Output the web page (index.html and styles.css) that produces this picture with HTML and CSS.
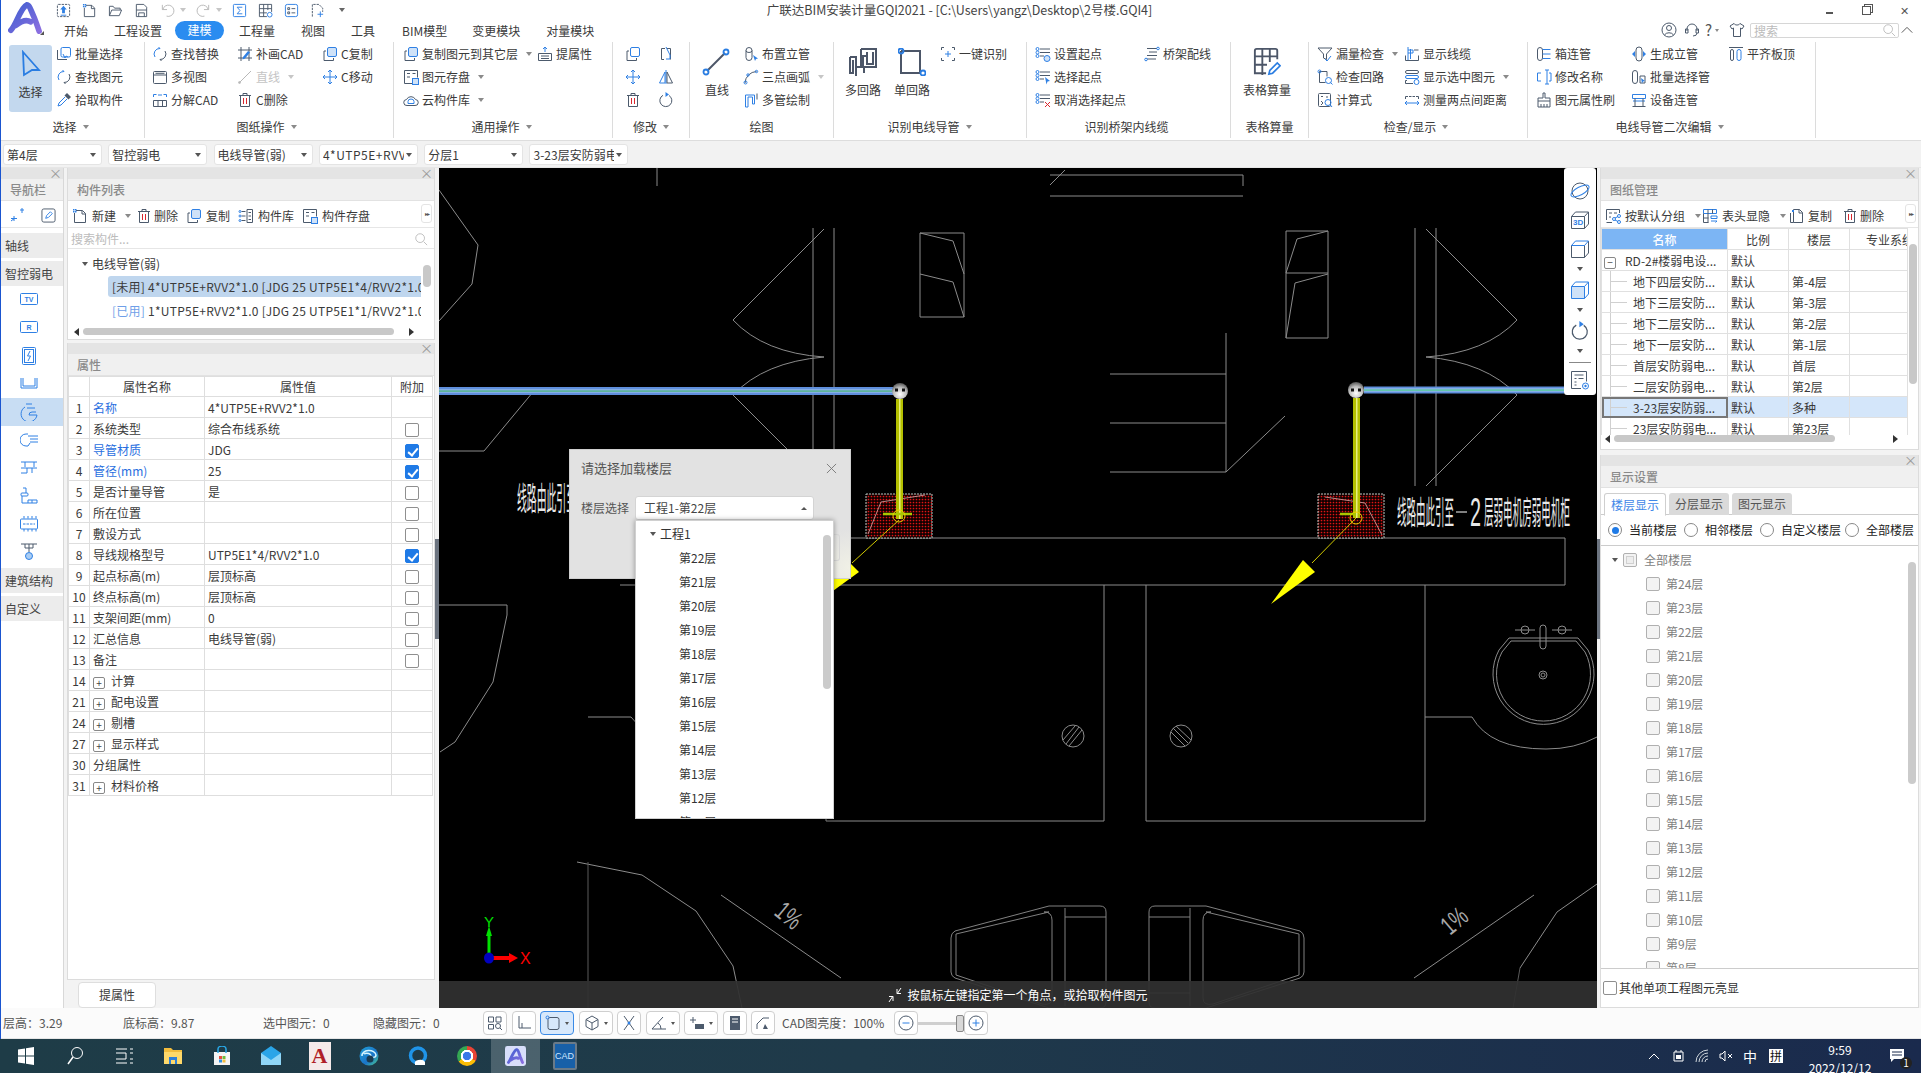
FILE: index.html
```html
<!DOCTYPE html>
<html lang="zh-CN">
<head>
<meta charset="utf-8">
<title>广联达BIM安装计量GQI2021</title>
<link rel="stylesheet" href="styles.css">
</head>
<body>
<svg class="sprite" xmlns="http://www.w3.org/2000/svg">
<defs>
<linearGradient id="lg" x1="0" y1="0" x2="1" y2="1"><stop offset="0" stop-color="#3f5fd0"/><stop offset="1" stop-color="#8a6ee0"/></linearGradient>
<radialGradient id="ball" cx=".5" cy=".7" r=".7"><stop offset="0" stop-color="#fff"/><stop offset=".6" stop-color="#bbb"/><stop offset="1" stop-color="#555"/></radialGradient>
<linearGradient id="edge" x1="0" y1="0" x2="1" y2="1"><stop offset="0" stop-color="#1fa0d8"/><stop offset=".6" stop-color="#1b74c8"/><stop offset="1" stop-color="#4fd08a"/></linearGradient>
<pattern id="rd" width="3" height="3" patternUnits="userSpaceOnUse"><rect width="3" height="3" fill="#120000"/><circle cx="1.5" cy="1.5" r=".85" fill="#e01414"/></pattern>
</defs>
<symbol id="up" viewBox="0 0 16 16"><rect class="sg dash" x="1.5" y="1.5" width="13" height="13" rx="1"/><path class="fb" d="M8 3l3.5 4H9.5v4h-3V7H4.500z"/><path class="sb" d="M5 13h6"/></symbol>
<symbol id="new" viewBox="0 0 16 16"><path class="sg" d="M4 2.500h6.500l3 3V14.500H2.500V5"/><path class="sg" d="M10 2.500v3.500h3.500"/><path class="fb" d="M1 1h1.500v1.500H1zM3 1h1.500v1.500H3zM1 3h1.500v1.500H1zM3 3h1.500v1.500H3z"/></symbol>
<symbol id="open" viewBox="0 0 16 16"><path class="sg" d="M1.500 13.500v-10h4l1.500 2h6v2M1.500 13.500l2.500-6h10.500l-2.500 6z"/></symbol>
<symbol id="save" viewBox="0 0 16 16"><path class="sg" d="M2.500 1.500h8l3 3v10h-11zM2.500 7.500h11M5 14.500v-4h6v4"/></symbol>
<symbol id="undo" viewBox="0 0 16 16"><path class="sl" d="M2.500 2v5h5M3 7a6 6 0 1 1 4 7"/></symbol>
<symbol id="redo" viewBox="0 0 16 16"><path class="sl" d="M13.500 2v5h-5M13 7a6 6 0 1 0-4 7"/></symbol>
<symbol id="sum" viewBox="0 0 16 16"><rect class="sb" x="1.500" y="1.500" width="13" height="13" rx="1"/><path class="sb" d="M11 4.500H5.500L8.500 8l-3 3.500H11"/></symbol>
<symbol id="gridq" viewBox="0 0 16 16"><path class="sg" d="M1.500 1.500h13v8M1.500 1.500v13h8M1.500 6h13M1.500 10.500h8M6 1.500v13M10.500 1.500v6"/><circle class="sb" cx="12.500" cy="12.500" r="2.500"/></symbol>
<symbol id="listq" viewBox="0 0 16 16"><rect class="sb" x="1.500" y="1.500" width="13" height="13" rx="2"/><path class="sg" d="M4 5h2v2H4zM4 9.500h2v2H4zM8 6h4M8 10.500h4"/></symbol>
<symbol id="docp" viewBox="0 0 16 16"><path class="sg dash" d="M2.500 14.500v-13h7l4 4v4"/><path class="sb" d="M11 9v6M8 12h6"/></symbol>
<symbol id="batch" viewBox="0 0 16 16"><rect class="sb" x="5" y="1.500" width="9.500" height="9.500" rx="1.500"/><path class="sg" d="M1.500 4v9.500H11"/><path class="sb" d="M7 8l2 4 1-2 2 1"/></symbol>
<symbol id="find" viewBox="0 0 16 16"><path class="sb" d="M3 11A5.500 5.500 0 0 1 8 2.500L6.500 1"/><path class="sg" d="M13 5a5.500 5.500 0 0 1-5 8.500l1.500 1.500"/></symbol>
<symbol id="pick" viewBox="0 0 16 16"><path class="fg" d="M11 1l4 4-2.500 2.500-4-4z"/><path class="sb" d="M9 5L3 11l-1 3 3-1 6-6"/></symbol>
<symbol id="mv" viewBox="0 0 16 16"><rect class="sg" x="1.500" y="2.500" width="13" height="12" rx="1"/><path class="sg" d="M1.500 6h13M3.500 4.300h9"/></symbol>
<symbol id="expl" viewBox="0 0 16 16"><path class="sb" d="M1.500 5V2.500h3M11.500 2.500h3V5M6 3h4"/><path class="sg" d="M1.500 8.500h13v6h-13zM6 8.500v6M10.500 8.500v6"/></symbol>
<symbol id="patch" viewBox="0 0 16 16"><path class="sg" d="M4 1v14M12 1v14M1 4h14M1 12h14"/><path class="fb" d="M6 11l5-6 2 1.500-5 6-2.500 1z"/></symbol>
<symbol id="ln" viewBox="0 0 16 16"><path class="sl" d="M2 14L14 2"/><circle class="sl" cx="2.500" cy="13.500" r="1"/></symbol>
<symbol id="trash" viewBox="0 0 16 16"><path class="sg" d="M2 3.500h12M6 3.500V1.500h4v2M3.500 3.500v11h9v-11"/><path class="sr" d="M6.500 6v6M9.500 6v6"/></symbol>
<symbol id="dup" viewBox="0 0 16 16"><rect class="fl" x="5.500" y="1.500" width="9" height="9" rx="1.500"/><path class="sg" d="M4 5H2v9.500h9.500V12"/></symbol>
<symbol id="move" viewBox="0 0 16 16"><path class="sb" d="M8 1v14M1 8h14M6 3l2-2 2 2M6 13l2 2 2-2M3 6L1 8l2 2M13 6l2 2-2 2"/></symbol>
<symbol id="store" viewBox="0 0 16 16"><path class="sg" d="M9 14.500H1.500v-13h13v7"/><path class="sg" d="M4 4.500h3M4 8h3M9.500 4.500h3"/><rect class="fl" x="9.500" y="9.500" width="6" height="6"/></symbol>
<symbol id="cloud" viewBox="0 0 16 16"><path class="sg" d="M4 13.500a3 3 0 0 1-.5-6 5 5 0 0 1 9 0 3 3 0 0 1-.5 6z"/><path class="sb" d="M5 9.500a3 2.500 0 0 1 6 0v2H5z"/></symbol>
<symbol id="prop" viewBox="0 0 16 16"><path class="sg" d="M1.500 14.500v-7h13v7zM4 10h8M4 12.500h8"/><path class="sb" d="M8 6V1M6 3l2-2 2 2"/></symbol>
<symbol id="flipv" viewBox="0 0 16 16"><path class="sg" d="M7 2.500H3.500v11H6M9 2.500h3.500v11"/><path class="sb" d="M8 1l4 8v4H8"/></symbol>
<symbol id="mirror" viewBox="0 0 16 16"><path class="sb" d="M7 3L1.500 14H7zM8 1v14"/><path class="sg" d="M9 3l5.500 11H9z"/></symbol>
<symbol id="rot" viewBox="0 0 16 16"><path class="sg" d="M11 3.500a6 6 0 1 1-6-.2"/><path class="fb" d="M7.500 0l3.500 2.500-3.500 2.500z"/></symbol>
<symbol id="riser" viewBox="0 0 16 16"><rect class="sg" x="3" y="1.500" width="6" height="13" rx="3"/><path class="sg" d="M3 4.500a3 2 0 0 0 6 0"/><path class="fb" d="M10 9l5 3.500-2 .5-1 2z"/></symbol>
<symbol id="arc" viewBox="0 0 16 16"><path class="sg" d="M2 14A12 12 0 0 1 13.500 2.500"/><circle class="sb" cx="2.500" cy="13.500" r="1.500"/><circle class="sb" cx="5" cy="6" r="1.200"/><circle class="sb" cx="13.500" cy="2.500" r="1.200"/></symbol>
<symbol id="mp" viewBox="0 0 16 16"><path class="sb" d="M2.500 15V3h9v9h-2V5H5v10z"/><path class="sg" d="M14 1.500v6"/></symbol>
<symbol id="one" viewBox="0 0 16 16"><path class="sg" d="M4 1.500H1.500V4M12 1.500h2.500V4M4 14.500H1.500V12M12 14.500h2.500V12"/><path class="sb" d="M8 5v6M5 8h6"/></symbol>
<symbol id="sset" viewBox="0 0 16 16"><path class="sg" d="M5 3h10M5 6.500h10M5 10h4"/><circle class="sb" cx="2.500" cy="3" r="1.500"/><circle class="sb" cx="2.500" cy="6.500" r="1.500"/><circle class="sb" cx="2.500" cy="10" r="1.500"/><circle class="fl" cx="12" cy="12.500" r="3"/></symbol>
<symbol id="ssel" viewBox="0 0 16 16"><path class="sg" d="M5 3h10M5 6.500h10M5 10h4"/><circle class="sb" cx="2.500" cy="3" r="1.500"/><circle class="sb" cx="2.500" cy="6.500" r="1.500"/><circle class="sb" cx="2.500" cy="10" r="1.500"/><path class="fb" d="M10 8l5 4-2.500.5-1 3z"/></symbol>
<symbol id="scan" viewBox="0 0 16 16"><path class="sg" d="M5 3h10M5 6.500h10M5 10h4"/><circle class="sb" cx="2.500" cy="3" r="1.500"/><circle class="sb" cx="2.500" cy="6.500" r="1.500"/><circle class="sb" cx="2.500" cy="10" r="1.500"/><path class="sr" d="M10 10l5 5M15 10l-5 5"/></symbol>
<symbol id="tray" viewBox="0 0 16 16"><path class="sg" d="M3 2.500h10M5 6h8M3 9.500h10M3 13h9"/><circle class="sb" cx="14" cy="2.500" r="1.300"/><circle class="sb" cx="2" cy="13.500" r="1.300"/></symbol>
<symbol id="leak" viewBox="0 0 16 16"><path class="sg" d="M1 2h14L9.500 8v5.500L6.500 12V8z"/><path class="sb" d="M8 13l2 2 4-5"/></symbol>
<symbol id="showc" viewBox="0 0 16 16"><path class="sb" d="M4 1v14M6.500 3v10M4 4h5v3H4"/><path class="sg" d="M1.500 9.500v5h13v-5M10 4h4.500"/></symbol>
<symbol id="chkl" viewBox="0 0 16 16"><path class="sg" d="M2.500 2.500v11h6M2.500 2.500H10v5"/><circle class="sb" cx="2.500" cy="2.500" r="1.500"/><circle class="sb" cx="11.500" cy="11.500" r="3"/><path class="sb" d="M13.500 13.500l2 2"/></symbol>
<symbol id="calc" viewBox="0 0 16 16"><rect class="sg" x="1.500" y="1.500" width="12" height="13" rx="1"/><path class="sg" d="M4 4.500h2M9 5h2M4 9l2 2-2 2"/><circle class="sb" cx="11" cy="10.500" r="3"/><path class="sb" d="M13 12.500l2 2.500"/></symbol>
<symbol id="showsel" viewBox="0 0 16 16"><rect class="sg" x="1.500" y="1.500" width="13" height="3" rx="1.500"/><rect class="sb" x="1.500" y="6.500" width="13" height="3" rx="1.500"/><path class="sg" d="M3 11.500h-1.500v3H9"/><circle class="sb" cx="12.500" cy="13" r="2.500"/></symbol>
<symbol id="meas" viewBox="0 0 16 16"><path class="sg dash" d="M1.500 4.500h13M1.500 4.500v3M14.500 4.500v3"/><path class="sb" d="M1 11h14M3 9l-2 2 2 2M13 9l2 2-2 2"/></symbol>
<symbol id="ref" viewBox="0 0 16 16"><rect class="sg" x="1.500" y="1.500" width="5" height="13" rx="2.500"/><path class="sb" d="M6.500 3.500h8M6.500 8h8M6.500 12.500h8"/></symbol>
<symbol id="ren" viewBox="0 0 16 16"><path class="sb" d="M5 4H1.500v8H5M9 1h4M9 15h4M11 1v14M13 4h2v8h-2"/></symbol>
<symbol id="brush" viewBox="0 0 16 16"><path class="sg" d="M7 1h2v5h5v3H2V6h5zM2 9v6h12V9M5 15v-3M8 15v-3M11 15v-3"/></symbol>
<symbol id="rise2" viewBox="0 0 16 16"><rect class="sg" x="5" y="1" width="6" height="14" rx="3"/><path class="fb" d="M1 8l3-3v6zM15 8l-3-3v6z"/></symbol>
<symbol id="batch2" viewBox="0 0 16 16"><rect class="sg" x="1.500" y="1.500" width="5" height="13" rx="2.500"/><path class="sg" d="M9 7h5v7H9z"/><path class="fb" d="M10 9l4 3-2 .5-1 2z"/></symbol>
<symbol id="equip" viewBox="0 0 16 16"><path class="sb" d="M1.500 2.500h13v4h-13zM2 9h12"/><path class="sg" d="M4 6.500v8M12 6.500v8M1.500 14.500h13"/></symbol>
<symbol id="flat" viewBox="0 0 16 16"><path class="sg" d="M1 1.500h14"/><rect class="sg" x="2.500" y="3.500" width="3" height="11" rx="1.500"/><rect class="sb" x="9" y="3.500" width="4" height="11" rx="2"/></symbol>
<symbol id="dupt" viewBox="0 0 16 16"><rect class="sb" x="5.500" y="1.500" width="9" height="9" rx="1.500"/><path class="sg" d="M4 5H2v9.500h9.500V12"/></symbol>
<symbol id="lib" viewBox="0 0 16 16"><path class="sg" d="M9 1.500h5.500v13H9z"/><path class="sg" d="M10.500 4.500h2.500M10.500 8h2.500M10.500 11.500h2.500M3.500 3.500h4M3.500 8h4M3.500 12.500h4"/><circle class="sb" cx="2" cy="3.500" r="1"/><circle class="sb" cx="2" cy="8" r="1"/><circle class="sb" cx="2" cy="12.500" r="1"/></symbol>
<symbol id="grp" viewBox="0 0 16 16"><path class="sg" d="M1.500 12V1.500h13V5M1.500 14.500H7"/><path class="sg" d="M4 5h3M9 5h3M4 9h2"/><circle class="sb" cx="9" cy="11" r="1.500"/><circle class="sb" cx="14" cy="8" r="1.500"/><circle class="sb" cx="14" cy="14" r="1.500"/><path class="sb" d="M10 10l3-1.500M10 12l3 1.500"/></symbol>
<symbol id="tbl" viewBox="0 0 16 16"><path class="sb" d="M1.500 1.500h13v4h-13z"/><path class="sg" d="M1.500 5.500v9h5M1.500 10h5M6 1.500v13M10.500 1.500v4"/><path class="sb" d="M9 8h6v2.500H9zM9 13h6M15 13l-1.500 1.500"/></symbol>
<symbol id="doc2" viewBox="0 0 16 16"><path class="sg" d="M5.500 1.500h6l3 3v10h-9zM2.500 5v9.500h3M11 1.500V5h3.500"/><path class="fb" d="M4 2h2v2H4z"/></symbol>
<symbol id="orbit" viewBox="0 0 20 20"><circle class="sg" cx="10" cy="10" r="8"/><ellipse class="sb" cx="10" cy="10" rx="10" ry="4" transform="rotate(-28 10 10)"/></symbol>
<symbol id="c3d" viewBox="0 0 20 20"><path class="sg" d="M1.500 6.500h13v12h-13zM1.500 6.500l4-4.500h13v12l-4 4.500M14.500 6.500l4-4.500"/></symbol>
<symbol id="cube" viewBox="0 0 20 20"><path class="sg" d="M1.500 6.500h13v12h-13zM14.500 18.500l4-4.500V2"/><path class="sb" d="M1.500 6.500l4-4.500h13l-4 4.500z"/></symbol>
<symbol id="cubeb" viewBox="0 0 20 20"><path class="fl" d="M1.500 6.500h13v12h-13z"/><path class="sb" d="M1.500 6.500l4-4.500h13v12l-4 4.500M14.500 6.500l4-4.500"/></symbol>
<symbol id="rlist" viewBox="0 0 20 20"><path class="sg" d="M1.500 18.500v-17h15v10M1.500 18.500H11M4.500 5h9M4.500 8.500h2M8.500 8.500h5M4.500 12h2M4.500 15h2"/><circle class="sb" cx="15.500" cy="16" r="3"/><circle class="fb" cx="15.500" cy="16" r="1.200"/></symbol>
<symbol id="toilet" viewBox="940 900 180 112"><path class="scad" d="M1106 912Q1106 906 1100 906H1049L955 931Q951 933 951 938V972Q951 976 955 978L1049 1008H1100Q1106 1008 1106 1002ZM1049 912L956 934V975L1042 1004Q1052 1006 1052 998V920Q1052 912 1044 912ZM1065 908V1006M1065 917H1106M1065 993H1106"/></symbol>
</svg>

<div class="page">
  <header class="top">
    <div class="logo">
      <svg class="logo-a" viewBox="0 0 36 34"><path d="M3 30C9 24 13 6 20 3c3 0 5 8 8 14 2 5 4 11 5 14M8 25c5-4 11-7 16-4" fill="none" stroke="url(#lg)" stroke-width="6" stroke-linecap="round"/></svg>
      <i class="logo-mark"></i>
    </div>
    <div class="top-rows">
      <div class="row-title">
        <div class="qat">
          <svg class="ic"><use href="#up"/></svg>
          <svg class="ic"><use href="#new"/></svg>
          <svg class="ic"><use href="#open"/></svg>
          <svg class="ic"><use href="#save"/></svg>
          <svg class="ic"><use href="#undo"/></svg><i class="caret lt"></i>
          <svg class="ic"><use href="#redo"/></svg><i class="caret lt"></i>
          <svg class="ic"><use href="#sum"/></svg>
          <svg class="ic"><use href="#gridq"/></svg>
          <svg class="ic"><use href="#listq"/></svg>
          <svg class="ic"><use href="#docp"/></svg>
          <i class="caret qm"></i>
        </div>
        <div class="wintitle">广联达BIM安装计量GQI2021 - [C:\Users\yangz\Desktop\2号楼.GQI4]</div>
        <div class="winbtns"><span class="w-min"></span><span class="w-max"></span><span class="w-close">✕</span></div>
      </div>
      <div class="row-tabs">
        <nav class="tabs">
          <span class="tab t1">开始</span><span class="tab t2">工程设置</span><span class="tab t3 on">建模</span><span class="tab t4">工程量</span><span class="tab t5">视图</span><span class="tab t6">工具</span><span class="tab t7">BIM模型</span><span class="tab t8">变更模块</span><span class="tab t9">对量模块</span>
        </nav>
        <div class="tools-r">
          <svg class="ic m1" viewBox="0 0 16 16"><circle class="sg" cx="8" cy="8" r="7"/><circle class="sg" cx="8" cy="6" r="2.500"/><path class="sg" d="M3.500 13a5 4 0 0 1 9 0"/></svg>
          <svg class="ic m2" viewBox="0 0 16 16"><path class="sg" d="M3 9V7a5 5 0 0 1 10 0v2M3 7H1.500v4H4V7zM12 7h2.500v4H12zM13 11a4 3 0 0 1-4 3"/></svg>
          <span class="help">?<i class="caret sm"></i></span>
          <svg class="ic m3" viewBox="0 0 16 16"><path class="sg" d="M5 1.500L1 4l2 3 1.500-1v8.500h7V6L13 7l2-3-4-2.500c-1 2-5 2-6 0z"/></svg>
          <div class="searchbox"><span>搜索</span><svg class="ic s14" viewBox="0 0 16 16"><circle class="sl" cx="7" cy="7" r="5"/><path class="sl" d="M11 11l4 4"/></svg></div>
          <svg class="ic chev" viewBox="0 0 16 16"><path class="sk" d="M2 11l6-6 6 6"/></svg>
        </div>
      </div>
    </div>
  </header>

  <section class="ribbon">
    <div class="grp g1">
      <div class="grp-body">
        <div class="bigsel"><svg class="ic big" viewBox="0 0 22 28"><path class="sb2" d="M3 2l16 18-7 0-8 5z"/></svg><span>选择</span></div>
        <div class="col">
          <div class="it"><svg class="ic"><use href="#batch"/></svg>批量选择</div>
          <div class="it"><svg class="ic"><use href="#find"/></svg>查找图元</div>
          <div class="it"><svg class="ic"><use href="#pick"/></svg>拾取构件</div>
        </div>
      </div>
      <div class="grp-label">选择<i class="caret"></i></div>
    </div>
    <div class="grp g2">
      <div class="grp-body">
        <div class="col w85">
          <div class="it"><svg class="ic"><use href="#find"/></svg>查找替换</div>
          <div class="it"><svg class="ic"><use href="#mv"/></svg>多视图</div>
          <div class="it"><svg class="ic"><use href="#expl"/></svg>分解CAD</div>
        </div>
        <div class="col w85">
          <div class="it"><svg class="ic"><use href="#patch"/></svg>补画CAD</div>
          <div class="it off"><svg class="ic"><use href="#ln"/></svg>直线<i class="caret lt"></i></div>
          <div class="it"><svg class="ic"><use href="#trash"/></svg>C删除</div>
        </div>
        <div class="col">
          <div class="it"><svg class="ic"><use href="#dup"/></svg>C复制</div>
          <div class="it"><svg class="ic"><use href="#move"/></svg>C移动</div>
        </div>
      </div>
      <div class="grp-label">图纸操作<i class="caret"></i></div>
    </div>
    <div class="grp g3">
      <div class="grp-body">
        <div class="col w134">
          <div class="it"><svg class="ic"><use href="#dup"/></svg>复制图元到其它层<i class="caret"></i></div>
          <div class="it"><svg class="ic"><use href="#store"/></svg>图元存盘<i class="caret"></i></div>
          <div class="it"><svg class="ic"><use href="#cloud"/></svg>云构件库<i class="caret"></i></div>
        </div>
        <div class="col">
          <div class="it"><svg class="ic"><use href="#prop"/></svg>提属性</div>
        </div>
      </div>
      <div class="grp-label">通用操作<i class="caret"></i></div>
    </div>
    <div class="grp g4">
      <div class="grp-body">
        <div class="col w33">
          <div class="it"><svg class="ic"><use href="#dupt"/></svg></div>
          <div class="it"><svg class="ic"><use href="#move"/></svg></div>
          <div class="it"><svg class="ic"><use href="#trash"/></svg></div>
        </div>
        <div class="col">
          <div class="it"><svg class="ic"><use href="#flipv"/></svg></div>
          <div class="it"><svg class="ic"><use href="#mirror"/></svg></div>
          <div class="it"><svg class="ic"><use href="#rot"/></svg></div>
        </div>
      </div>
      <div class="grp-label">修改<i class="caret"></i></div>
    </div>
    <div class="grp g5">
      <div class="grp-body">
        <div class="bigb w41"><svg class="ic big" viewBox="0 0 28 28"><path class="sg2" d="M5 23L23 5"/><circle class="sb2" cx="4" cy="24" r="2.500"/><circle class="sb2" cx="24" cy="4" r="2.500"/></svg><span>直线</span></div>
        <div class="col">
          <div class="it"><svg class="ic"><use href="#riser"/></svg>布置立管</div>
          <div class="it"><svg class="ic"><use href="#arc"/></svg>三点画弧<i class="caret lt"></i></div>
          <div class="it"><svg class="ic"><use href="#mp"/></svg>多管绘制</div>
        </div>
      </div>
      <div class="grp-label">绘图</div>
    </div>
    <div class="grp g6">
      <div class="grp-body">
        <div class="bigb w36"><svg class="ic big" viewBox="0 0 28 28"><path class="sg2" d="M1 9h6v19M1 9v16h3V12M12 1h15v18H15v6M12 1v18h-5M18 4v12h6V4M17 8h-3v12"/></svg><span>多回路</span></div>
        <div class="bigb w36 ml13"><svg class="ic big" viewBox="0 0 28 28"><path class="sg2" d="M3 3h19v22M3 3v22h19"/><circle class="sb2" cx="3" cy="3" r="2.500"/><circle class="sb2" cx="25" cy="25" r="2.500"/></svg><span>单回路</span></div>
        <div class="col ml10">
          <div class="it"><svg class="ic"><use href="#one"/></svg>一键识别</div>
        </div>
      </div>
      <div class="grp-label">识别电线导管<i class="caret"></i></div>
    </div>
    <div class="grp g7">
      <div class="grp-body">
        <div class="col w109">
          <div class="it"><svg class="ic"><use href="#sset"/></svg>设置起点</div>
          <div class="it"><svg class="ic"><use href="#ssel"/></svg>选择起点</div>
          <div class="it"><svg class="ic"><use href="#scan"/></svg>取消选择起点</div>
        </div>
        <div class="col">
          <div class="it"><svg class="ic"><use href="#tray"/></svg>桥架配线</div>
        </div>
      </div>
      <div class="grp-label">识别桥架内线缆</div>
    </div>
    <div class="grp g8">
      <div class="grp-body">
        <div class="bigb w48"><svg class="ic big" viewBox="0 0 30 30"><path class="sg2" d="M26 12V3a2 2 0 0 0-2-2H4a2 2 0 0 0-2 2v24h12M2 9h24M2 18h13M10 1v28M18 1v14"/><path class="sb2" d="M17 28l1-4 8-8 3 3-8 8z"/></svg><span>表格算量</span></div>
      </div>
      <div class="grp-label">表格算量</div>
    </div>
    <div class="grp g9">
      <div class="grp-body">
        <div class="col w87">
          <div class="it"><svg class="ic"><use href="#leak"/></svg>漏量检查<i class="caret"></i></div>
          <div class="it"><svg class="ic"><use href="#chkl"/></svg>检查回路</div>
          <div class="it"><svg class="ic"><use href="#calc"/></svg>计算式</div>
        </div>
        <div class="col">
          <div class="it"><svg class="ic"><use href="#showc"/></svg>显示线缆</div>
          <div class="it"><svg class="ic"><use href="#showsel"/></svg>显示选中图元<i class="caret"></i></div>
          <div class="it"><svg class="ic"><use href="#meas"/></svg>测量两点间距离</div>
        </div>
      </div>
      <div class="grp-label">检查/显示<i class="caret"></i></div>
    </div>
    <div class="grp g10">
      <div class="grp-body">
        <div class="col w95">
          <div class="it"><svg class="ic"><use href="#ref"/></svg>箱连管</div>
          <div class="it"><svg class="ic"><use href="#ren"/></svg>修改名称</div>
          <div class="it"><svg class="ic"><use href="#brush"/></svg>图元属性刷</div>
        </div>
        <div class="col w97">
          <div class="it"><svg class="ic"><use href="#rise2"/></svg>生成立管</div>
          <div class="it"><svg class="ic"><use href="#batch2"/></svg>批量选择管</div>
          <div class="it"><svg class="ic"><use href="#equip"/></svg>设备连管</div>
        </div>
        <div class="col">
          <div class="it"><svg class="ic"><use href="#flat"/></svg>平齐板顶</div>
        </div>
      </div>
      <div class="grp-label">电线导管二次编辑<i class="caret"></i></div>
    </div>
  </section>

  <section class="selbar">
    <div class="sel"><span>第4层</span><i class="caret dk"></i></div>
    <div class="sel"><span>智控弱电</span><i class="caret dk"></i></div>
    <div class="sel"><span>电线导管(弱)</span><i class="caret dk"></i></div>
    <div class="sel"><span class="wide">4*UTP5E+RVV2*1.0</span><i class="caret dk"></i></div>
    <div class="sel"><span>分层1</span><i class="caret dk"></i></div>
    <div class="sel"><span>3-23层安防弱电</span><i class="caret dk"></i></div>
  </section>

  <main class="main">
    <aside class="nav">
      <div class="pclose"><span>×</span></div>
      <div class="ptitle">导航栏</div>
      <div class="nav-tools">
        <svg class="ic" viewBox="0 0 16 16"><path class="sb" d="M2 14l4-3M2 11.500h6M5 9v5M11 3h4M13 1v5"/></svg>
        <svg class="ic bx" viewBox="0 0 16 16"><rect class="sg" x="1" y="1" width="14" height="14" rx="2"/><path class="sb" d="M5 11l1-3 4-4 2 2-4 4z"/></svg>
      </div>
      <div class="nav-h first">轴线</div>
      <div class="nav-h second">智控弱电</div>
      <div class="nav-i"><svg class="nic" viewBox="0 0 18 14"><rect class="sb" x=".5" y=".5" width="17" height="11" rx="1"/><text class="tb-lbl" x="9" y="9">TV</text></svg></div>
      <div class="nav-i"><svg class="nic" viewBox="0 0 18 14"><rect class="sb" x=".5" y=".5" width="17" height="11" rx="1"/><text class="tb-lbl" x="9" y="9">R</text></svg></div>
      <div class="nav-i"><svg class="nic" viewBox="0 0 18 18"><rect class="sb" x="2.500" y=".5" width="13" height="17" rx="1"/><rect class="sb" x="4.500" y="2.500" width="9" height="13"/><path class="sb" d="M10 4L7.500 9h3L8 14"/></svg></div>
      <div class="nav-i"><svg class="nic" viewBox="0 0 18 14"><path class="sb" d="M1 1v10h16V1M3 1v8h12V1"/></svg></div>
      <div class="nav-i cur"><svg class="nic" viewBox="0 0 18 18"><path class="sb" d="M5 4a8 8 0 1 0 12 8H9a3 3 0 0 1 3-3h4M6 1h6M7 5h8"/></svg></div>
      <div class="nav-i"><svg class="nic" viewBox="0 0 18 14"><path class="sb" d="M8 1H6a6 6 0 0 0 0 12h2l2-3M8 3h10M10 6h8M10 9h8"/></svg></div>
      <div class="nav-i"><svg class="nic" viewBox="0 0 18 18"><path class="sb" d="M1 3h16M5 3v5M14 3v5M1 9h16M7 9v5H1M12 9v5"/></svg></div>
      <div class="nav-i"><svg class="nic" viewBox="0 0 18 18"><rect class="sb" x="1" y="6" width="7" height="3" rx="1"/><path class="sb" d="M3 1h3v5M2 9v7h6v-3h9v3h-9M12 13v3"/></svg></div>
      <div class="nav-i"><svg class="nic" viewBox="0 0 18 18"><rect class="sb" x=".5" y="4" width="17" height="10" rx="1"/><path class="sb dash" d="M3 9h12M4 1v3M8 1v3M12 1v3M16 1v3M4 14v3M8 14v3M12 14v3M16 14v3"/></svg></div>
      <div class="nav-i"><svg class="nic" viewBox="0 0 18 18"><path class="sg" d="M1 1h16M9 1v8M5 1v4h8V1"/><circle class="fl2" cx="9" cy="13" r="3.500"/></svg></div>
      <div class="nav-h top2">建筑结构</div>
      <div class="nav-h">自定义</div>
    </aside>

    <div class="col2">
      <section class="panel pa">
        <div class="pclose"><span>×</span></div>
        <div class="ptitle">构件列表</div>
        <div class="ptools">
          <span class="pt a1"><svg class="ic"><use href="#new"/></svg>新建<i class="caret"></i></span>
          <span class="pt a2"><svg class="ic"><use href="#trash"/></svg>删除</span>
          <span class="pt a3"><svg class="ic"><use href="#dup"/></svg>复制</span>
          <span class="pt a4"><svg class="ic"><use href="#lib"/></svg>构件库</span>
          <span class="pt a5"><svg class="ic"><use href="#store"/></svg>构件存盘</span>
          <span class="more">▸▸</span>
        </div>
        <div class="psearch"><span>搜索构件...</span><svg class="ic s14" viewBox="0 0 16 16"><circle class="sl" cx="7" cy="7" r="5"/><path class="sl" d="M11 11l4 4"/></svg></div>
        <div class="tree">
          <div class="tree-scrollarea">
            <div class="tr-root"><i class="caret dk"></i>电线导管(弱)</div>
            <div class="tr-item sel-row">[未用] 4*UTP5E+RVV2*1.0 [JDG 25 UTP5E1*4/RVV2*1.0 ]</div>
            <div class="tr-item"><b class="used">[已用]</b> 1*UTP5E+RVV2*1.0 [JDG 25 UTP5E1*1/RVV2*1.0 ]</div>
          </div>
          <div class="vthumb"></div>
          <div class="hbar"><i class="arr l"></i><div class="hthumb"></div><i class="arr r"></i></div>
        </div>
      </section>
      <section class="panel pb">
        <div class="pclose"><span>×</span></div>
        <div class="ptitle">属性</div>
        <table class="ptable">
          <colgroup><col class="c1"><col class="c2"><col class="c3"><col class="c4"></colgroup>
          <thead><tr><th></th><th>属性名称</th><th>属性值</th><th>附加</th></tr></thead>
          <tbody>
            <tr><td class="n">1</td><td class="lnk">名称</td><td>4*UTP5E+RVV2*1.0</td><td></td></tr>
            <tr><td class="n">2</td><td>系统类型</td><td>综合布线系统</td><td class="k"><i class="cb"></i></td></tr>
            <tr><td class="n">3</td><td class="lnk">导管材质</td><td>JDG</td><td class="k"><i class="cb on"></i></td></tr>
            <tr><td class="n">4</td><td class="lnk">管径(mm)</td><td>25</td><td class="k"><i class="cb on"></i></td></tr>
            <tr><td class="n">5</td><td>是否计量导管</td><td>是</td><td class="k"><i class="cb"></i></td></tr>
            <tr><td class="n">6</td><td>所在位置</td><td></td><td class="k"><i class="cb"></i></td></tr>
            <tr><td class="n">7</td><td>敷设方式</td><td></td><td class="k"><i class="cb"></i></td></tr>
            <tr><td class="n">8</td><td>导线规格型号</td><td>UTP5E1*4/RVV2*1.0</td><td class="k"><i class="cb on"></i></td></tr>
            <tr><td class="n">9</td><td>起点标高(m)</td><td>层顶标高</td><td class="k"><i class="cb"></i></td></tr>
            <tr><td class="n">10</td><td>终点标高(m)</td><td>层顶标高</td><td class="k"><i class="cb"></i></td></tr>
            <tr><td class="n">11</td><td>支架间距(mm)</td><td>0</td><td class="k"><i class="cb"></i></td></tr>
            <tr><td class="n">12</td><td>汇总信息</td><td>电线导管(弱)</td><td class="k"><i class="cb"></i></td></tr>
            <tr><td class="n">13</td><td>备注</td><td></td><td class="k"><i class="cb"></i></td></tr>
            <tr><td class="n">14</td><td><i class="pm">+</i>计算</td><td></td><td></td></tr>
            <tr><td class="n">21</td><td><i class="pm">+</i>配电设置</td><td></td><td></td></tr>
            <tr><td class="n">24</td><td><i class="pm">+</i>剔槽</td><td></td><td></td></tr>
            <tr><td class="n">27</td><td><i class="pm">+</i>显示样式</td><td></td><td></td></tr>
            <tr><td class="n">30</td><td>分组属性</td><td></td><td></td></tr>
            <tr><td class="n">31</td><td><i class="pm">+</i>材料价格</td><td></td><td></td></tr>
          </tbody>
        </table>
      </section>
      <div class="pbtnrow"><span class="pbtn">提属性</span></div>
    </div>

    <div class="split"><i></i></div>

    <div class="canvas">
      <svg class="cad" viewBox="439 168 1158 840" xmlns="http://www.w3.org/2000/svg">
        <g class="cadl">
          <path d="M1050 175H1243V186M1050 185L1065 170M1050 196H1243"/>
          <path d="M439 190L478 245L472 284L439 321M657 168V186"/>
          <path d="M920 233H964V317H920ZM964 274L953 241L920 233M964 317L953 282L920 274"/>
          <path d="M1286 231H1328V338H1286ZM1286 273H1328M1286 273L1297 239L1328 231M1286 338L1295 283L1328 274"/>
          <path d="M1415 228V486M1436 228V486M1426 229L1517 320Q1486 353 1426 357Q1486 362 1517 395L1426 486"/>
          <path d="M813 228V486M834 228V486M824 229L733 320Q764 353 824 357Q764 362 733 395L824 486"/>
          <path d="M1110 374H1226M1110 423H1226M1110 472H1226M1226 333V472M1226 472L1285 416"/>
          <path d="M533 392L484 451H439"/>
          <path d="M439 605H507V615L493 682L455 742L440 752"/>
          <path d="M588 717H631L640 727"/>
          <path d="M620 538H1565V585H620"/>
          <path d="M826 585V821H1104V585M1146 585V821H1425V585"/>
          <path d="M1425 717H1472Q1490 749 1546 749Q1575 749 1597 737"/>
          <path d="M1499 650L1509 638H1578L1588 650A50.500 50.500 0 1 1 1499 650M1502 652L1511 641H1576L1585 652A47 47 0 1 1 1502 652"/>
          <circle cx="1543" cy="675" r="4"/><circle cx="1543" cy="675" r="2"/>
          <rect x="1540" y="625" width="6" height="24" rx="3"/>
          <circle cx="1525" cy="630" r="4"/><circle cx="1562" cy="630" r="4"/>
          <path d="M1515 630H1535M1552 630H1572"/>
          <ellipse cx="1073" cy="736" rx="11" ry="11"/><ellipse cx="1181" cy="736" rx="11" ry="11"/>
          <path d="M1066 744L1079 727M1069 746L1082 730M1063 740L1075 726M1173 728L1188 743M1171 732L1185 746M1176 726L1191 740"/>
          <path d="M577 862L642 875L696 911L733 966L742 1008"/>
          <path class="thin" d="M588 862V1008M1513 1008L1520 968"/>
          <path d="M721 895L841 978M1534 895L1414 978M1597 884L1557 912L1520 968"/>
        </g>
        <use href="#toilet" x="940" y="900" width="180" height="112"/>
        <use href="#toilet" x="940" y="900" width="180" height="112" class="flipx"/>
        <text class="pct" transform="translate(773 914) rotate(40) scale(.75 1.1)">1%</text>
        <text class="pct" transform="translate(1450 936) rotate(-40) scale(.75 1.1)">1%</text>

        <rect x="439" y="387" width="454" height="8" fill="#5f8fdc"/>
        <rect x="439" y="389" width="454" height="4" fill="#84aee6"/>
        <rect x="439" y="390.500" width="454" height="1.200" fill="#4fb87a"/>
        <rect x="1364" y="386.500" width="200" height="7" fill="#5f8fdc"/>
        <rect x="1364" y="388" width="200" height="4" fill="#84aee6"/>
        <rect x="1364" y="389.500" width="200" height="1.200" fill="#58d090"/>
        <rect x="866" y="494" width="66" height="44" fill="url(#rd)" stroke="#b9c9c4" stroke-dasharray="2 1"/>
        <rect x="1318" y="494" width="66" height="44" fill="url(#rd)" stroke="#b9c9c4" stroke-dasharray="2 1"/>
        <path class="pink" d="M868 534L881 502L925 495M1325 497L1365 503L1382 535"/>
        <rect x="896" y="399" width="7" height="120" fill="#b4c000"/><rect x="899" y="399" width="1.500" height="120" fill="#e8ee80"/>
        <rect x="1353" y="398" width="7" height="120" fill="#b4c000"/><rect x="1356" y="398" width="1.500" height="120" fill="#e8ee80"/>
        <path class="yg" d="M883 514H912M1340 514H1356"/>
        <circle class="yc" cx="899" cy="516" r="6"/><circle class="yc" cx="1356" cy="518" r="6"/>
        <path class="yl" d="M899 520L852 563M1356 518L1312 563"/>
        <path d="M847 560L859 572L815 604Z" fill="#ffff00"/>
        <path d="M1303 560L1315 572L1271 604Z" fill="#ffff00"/>
        <circle cx="900" cy="391" r="8" fill="url(#ball)"/><path d="M895 390h3M902 390h3" stroke="#111" stroke-width="3"/>
        <circle cx="1356" cy="390" r="8" fill="url(#ball)"/><path d="M1351 390h3M1358 390h3" stroke="#111" stroke-width="3"/>

        <text class="cadt" x="517" y="510" textLength="59" lengthAdjust="spacingAndGlyphs">线路由此引至</text>
        <text class="cadt" x="1397" y="524" textLength="57" lengthAdjust="spacingAndGlyphs">线路由此引至</text>
        <path d="M1456 512H1467" stroke="#fff"/>
        <text class="cadt thin2" x="1470" y="526" textLength="11" lengthAdjust="spacingAndGlyphs">2</text>
        <text class="cadt" x="1484" y="524" textLength="86" lengthAdjust="spacingAndGlyphs">层弱电机房弱电机柜</text>

        <path d="M489 956V934" stroke="#00e000" stroke-width="3"/><path d="M489 926l-3 10h6z" fill="#00e000"/>
        <text class="axy" x="489" y="927">Y</text>
        <path d="M492 958H510" stroke="#ff0000" stroke-width="4"/><path d="M518 958l-9-5v10z" fill="#ff0000"/>
        <text class="axx" x="520" y="964">X</text>
        <ellipse cx="489" cy="958" rx="5" ry="5.500" fill="#0000c0"/>
      </svg>

      <div class="viewbar">
        <svg class="vi"><use href="#orbit"/></svg>
        <div class="vi3d"><svg class="vi"><use href="#c3d"/></svg><span>3D</span></div>
        <svg class="vi"><use href="#cube"/></svg><i class="caret dk vc"></i>
        <svg class="vi"><use href="#cubeb"/></svg><i class="caret dk vc"></i>
        <svg class="vi"><use href="#rot"/></svg><i class="caret dk vc"></i>
        <hr class="vsep">
        <svg class="vi"><use href="#rlist"/></svg>
      </div>

      <div class="hint">
        <svg class="hint-ic" viewBox="0 0 14 16"><path d="M1 15l4-6M1 9.500h4V14M13 1L9 7M13 6.500H9V2" fill="none" stroke="#fff"/></svg>
        <span>按鼠标左键指定第一个角点，或拾取构件图元</span>
      </div>

      <div class="dialog">
        <div class="dlg-head"><span>请选择加载楼层</span><svg class="dlg-x" viewBox="0 0 12 12"><path d="M1 1l10 10M11 1L1 11"/></svg></div>
        <div class="dlg-row"><span>楼层选择</span>
          <div class="dlg-sel"><span>工程1-第22层</span><i class="caret-up"></i>
            <div class="dd">
              <div class="dd-root"><i class="caret dk"></i>工程1</div>
              <div class="dd-i">第22层</div><div class="dd-i">第21层</div><div class="dd-i">第20层</div><div class="dd-i">第19层</div><div class="dd-i">第18层</div><div class="dd-i">第17层</div><div class="dd-i">第16层</div><div class="dd-i">第15层</div><div class="dd-i">第14层</div><div class="dd-i">第13层</div><div class="dd-i">第12层</div><div class="dd-i">第11层</div>
              <div class="dd-thumb"></div>
            </div>
          </div>
        </div>
      </div>
    </div>

    <div class="split sr"><i></i></div>

    <div class="col3">
      <section class="panel pc">
        <div class="pclose"><span>×</span></div>
        <div class="ptitle">图纸管理</div>
        <div class="ptools">
          <span class="pt b1"><svg class="ic"><use href="#grp"/></svg>按默认分组<i class="caret"></i></span>
          <span class="pt b2"><svg class="ic"><use href="#tbl"/></svg>表头显隐<i class="caret"></i></span>
          <span class="pt b3"><svg class="ic"><use href="#doc2"/></svg>复制</span>
          <span class="pt b4"><svg class="ic"><use href="#trash"/></svg>删除</span>
          <span class="more">▸▸</span>
        </div>
        <div class="dwg">
          <table class="dtable">
            <colgroup><col class="d1"><col class="d2"><col class="d2"><col class="d4"></colgroup>
            <thead><tr><th class="act">名称</th><th>比例</th><th>楼层</th><th class="clip">专业系统</th></tr></thead>
            <tbody>
              <tr><td class="rt"><i class="pm mn">−</i>RD-2#楼弱电设...</td><td>默认</td><td></td><td></td></tr>
              <tr><td class="ch">地下四层安防...</td><td>默认</td><td>第-4层</td><td></td></tr>
              <tr><td class="ch">地下三层安防...</td><td>默认</td><td>第-3层</td><td></td></tr>
              <tr><td class="ch">地下二层安防...</td><td>默认</td><td>第-2层</td><td></td></tr>
              <tr><td class="ch">地下一层安防...</td><td>默认</td><td>第-1层</td><td></td></tr>
              <tr><td class="ch">首层安防弱电...</td><td>默认</td><td>首层</td><td></td></tr>
              <tr><td class="ch">二层安防弱电...</td><td>默认</td><td>第2层</td><td></td></tr>
              <tr class="cur"><td class="ch focus">3-23层安防弱...</td><td>默认</td><td>多种</td><td></td></tr>
              <tr><td class="ch">23层安防弱电...</td><td>默认</td><td>第23层</td><td></td></tr>
            </tbody>
          </table>
          <div class="dv"></div>
        </div>
        <div class="hbar r"><i class="arr l"></i><div class="hthumb t2"></div><i class="arr r"></i></div>
      </section>
      <section class="panel pd">
        <div class="pclose"><span>×</span></div>
        <div class="ptitle">显示设置</div>
        <div class="dtabs"><span class="dt on">楼层显示</span><span class="dt">分层显示</span><span class="dt">图元显示</span></div>
        <div class="radios">
          <span class="rd on r1"><i></i>当前楼层</span><span class="rd r2"><i></i>相邻楼层</span><span class="rd r3"><i></i>自定义楼层</span><span class="rd"><i></i>全部楼层</span>
        </div>
        <div class="ftree">
          <div class="f-root"><i class="caret dk"></i><i class="cb g part"></i>全部楼层</div>
          <div class="f-i"><i class="cb g"></i>第24层</div><div class="f-i"><i class="cb g"></i>第23层</div><div class="f-i"><i class="cb g"></i>第22层</div><div class="f-i"><i class="cb g"></i>第21层</div><div class="f-i"><i class="cb g"></i>第20层</div><div class="f-i"><i class="cb g"></i>第19层</div><div class="f-i"><i class="cb g"></i>第18层</div><div class="f-i"><i class="cb g"></i>第17层</div><div class="f-i"><i class="cb g"></i>第16层</div><div class="f-i"><i class="cb g"></i>第15层</div><div class="f-i"><i class="cb g"></i>第14层</div><div class="f-i"><i class="cb g"></i>第13层</div><div class="f-i"><i class="cb g"></i>第12层</div><div class="f-i"><i class="cb g"></i>第11层</div><div class="f-i"><i class="cb g"></i>第10层</div><div class="f-i"><i class="cb g"></i>第9层</div><div class="f-i"><i class="cb g"></i>第8层</div>
          <div class="f-thumb"></div>
        </div>
        <div class="fother"><i class="cb"></i>其他单项工程图元亮显</div>
      </section>
    </div>
  </main>

  <footer class="status">
    <span class="st s1">层高：3.29</span><span class="st s2">底标高：9.87</span><span class="st s3">选中图元：0</span><span class="st s4">隐藏图元：0</span>
    <div class="stb">
      <span class="tbn"><svg class="ic" viewBox="0 0 16 16"><path class="sg" d="M1.500 2h5v5h-5zM9 2h5v5H9zM1.500 9.500h5V14h-5z"/><circle class="sg" cx="11" cy="11" r="2.500"/><path class="sg" d="M13 13l2 2"/></svg></span>
      <span class="tbn"><svg class="ic" viewBox="0 0 16 16"><path class="sg" d="M3 1v12h12M6 8v5"/></svg></span>
      <span class="tbn wd act"><svg class="ic" viewBox="0 0 16 16"><rect class="sg" x="3" y="2.500" width="11" height="12" rx="2"/><circle class="sb" cx="2.500" cy="2.500" r="1.500"/></svg><i class="caret sm dk"></i></span>
      <span class="tbn wd"><svg class="ic" viewBox="0 0 16 16"><path class="sg" d="M8 1l6 3.500v7L8 15l-6-3.500v-7zM2 4.500L8 8l6-3.500M8 8v7"/></svg><i class="caret sm dk"></i></span>
      <span class="tbn"><svg class="ic" viewBox="0 0 16 16"><path class="sg" d="M3 1l10 14M13 1L3 15"/><circle class="fb" cx="8" cy="8" r="1.500"/></svg></span>
      <span class="tbn wd"><svg class="ic" viewBox="0 0 16 16"><path class="sg" d="M1 14h14M1 14L12 2M7 8a7 7 0 0 1 3 6"/></svg><i class="caret sm dk"></i></span>
      <span class="tbn wd"><svg class="ic" viewBox="0 0 16 16"><path class="sg" d="M4 2v6M1 5h6"/><rect class="fg" x="6" y="9" width="9" height="5"/></svg><i class="caret sm dk"></i></span>
      <span class="tbn"><svg class="ic" viewBox="0 0 16 16"><path class="fg" d="M3 1h10v14H3z"/><path class="sw" d="M5 4h6M5 7h6"/></svg></span>
      <span class="tbn"><svg class="ic" viewBox="0 0 16 16"><path class="sg" d="M2 14V9L8 3h6"/><path class="fg" d="M10 9l3 5h-5z"/></svg></span>
    </div>
    <span class="cadb">CAD图亮度：100%</span>
    <span class="tbn"><svg class="ic" viewBox="0 0 16 16"><circle class="sg" cx="8" cy="8" r="7"/><path class="sb" d="M4.500 8h7"/></svg></span>
    <div class="slider"><i></i></div>
    <span class="tbn"><svg class="ic" viewBox="0 0 16 16"><circle class="sg" cx="8" cy="8" r="7"/><path class="sb" d="M4.500 8h7M8 4.500v7"/></svg></span>
  </footer>

  <footer class="taskbar">
    <div class="tk-left">
      <span class="tk"><svg class="tic" viewBox="0 0 20 20"><path fill="#fff" d="M2 3.500l7-1v7H2zM10 2.300l8-1.200v8.400h-8zM2 10.500h7v7l-7-1zM10 10.500h8v8.400l-8-1.200z"/></svg></span>
      <span class="tk"><svg class="tic" viewBox="0 0 20 20"><circle cx="12" cy="7" r="5.500" fill="none" stroke="#fff"/><path d="M8 11l-5 7" stroke="#fff" stroke-width="1.500"/></svg></span>
      <span class="tk"><svg class="tic" viewBox="0 0 20 20"><path d="M2 3h11M2 17h11M2 7h10v6H2M16 3h3M16 7h3M16 13h3M16 17h3" fill="none" stroke="#fff"/></svg></span>
      <span class="tk"><svg class="tic" viewBox="0 0 20 20"><path fill="#f3bd3d" d="M1 2h7l2 2h9v14H1z"/><path fill="#ffd96a" d="M1 6h18v12H1z"/><path fill="#2f7fd8" d="M6 11h8v7h-2v-4H8v4H6z"/></svg></span>
      <span class="tk"><svg class="tic" viewBox="0 0 20 20"><path fill="#f4f4f4" d="M2 6h16v13H2z"/><path d="M6 7V3a4 3 0 0 1 8 0v4" fill="none" stroke="#29a9e8" stroke-width="1.500"/><path fill="#e74c3c" d="M7 10h3v3H7z"/><path fill="#6dbb3b" d="M10.500 10h3v3h-3z"/><path fill="#2f8fe0" d="M7 13.500h3v3H7z"/><path fill="#f3bd3d" d="M10.500 13.500h3v3h-3z"/></svg></span>
      <span class="tk"><svg class="tic" viewBox="0 0 20 20"><path fill="#2aa5e8" d="M0 7L10 0l10 7v12H0z"/><path fill="#8fd6f7" d="M0 7l10 7 10-7v12H0z"/></svg></span>
      <span class="tk acad">A</span>
      <span class="tk"><svg class="tic" viewBox="0 0 20 20"><circle cx="10" cy="10" r="9.500" fill="url(#edge)"/><path d="M3 10a7 5 0 0 1 14-1c0 3-5 3-5 1 0-2 -4-4 -7 -2" fill="none" stroke="#d6f5ff" stroke-width="1.500"/><circle cx="11" cy="13" r="3.500" fill="#1a3a50"/></svg></span>
      <span class="tk"><svg class="tic" viewBox="0 0 20 20"><circle cx="10" cy="9.500" r="7.500" fill="none" stroke="#1f94e8" stroke-width="3.500"/><path d="M7 18a5 3 0 0 1 10-2v3H7z" fill="#fff"/></svg></span>
      <span class="tk"><i class="chrome"></i></span>
      <span class="tk cur"><svg class="tic app" viewBox="0 0 36 34"><rect width="36" height="34" rx="4" fill="#d8defa"/><path d="M6 28C11 22 14 8 20 6c3 0 4 7 6 12 2 4 3 8 4 10M10 24c4-3 9-5 13-3" fill="none" stroke="url(#lg)" stroke-width="5" stroke-linecap="round"/></svg></span>
      <span class="tk"><span class="cadbox">CAD</span></span>
    </div>
    <div class="tk-right">
      <svg class="tr-ic" viewBox="0 0 14 14"><path d="M2 10l5-5 5 5" fill="none" stroke="#fff"/></svg>
      <svg class="tr-ic" viewBox="0 0 14 14"><path d="M3 3h9v9H3zM5 1v2M10 1v2" fill="none" stroke="#fff"/><path d="M5 6h5v4H5z" fill="#fff"/></svg>
      <svg class="tr-ic" viewBox="0 0 14 14"><path d="M1 13A12 12 0 0 1 13 1M4 13a9 9 0 0 1 9-9M7 13a6 6 0 0 1 6-6M10 13a3 3 0 0 1 3-3" fill="none" stroke="#cfd6dc"/></svg>
      <svg class="tr-ic" viewBox="0 0 14 14"><path d="M1 5h2l3-3v10l-3-3H1zM9 5l4 4M13 5l-4 4" fill="none" stroke="#fff"/></svg>
      <span class="tr-t">中</span>
      <span class="tr-pin">拼</span>
      <div class="clock"><span>9:59</span><span>2022/12/12</span></div>
      <div class="notif"><svg class="tr-ic" viewBox="0 0 14 14"><path d="M0 0h14v10H4l-3 3V10H0z" fill="#fff"/><path d="M2 3h10M2 6h10" stroke="#1a2a4d"/></svg><b>1</b></div>
    </div>
  </footer>
</div>
</body>
</html>
```

FILE: styles.css
```css
* { box-sizing: border-box; }
html, body { margin: 0; padding: 0; }
body {
  width: 1921px; height: 1073px; overflow: hidden; background: #f3f3f3;
  font: 12px/16px "Noto Sans CJK SC", "Noto Sans", sans-serif; color: #3a3a3a;
}
i, b { font-style: normal; font-weight: normal; }
.sprite { position: absolute; width: 0; height: 0; overflow: hidden; }
.page { position: relative; display: flex; flex-direction: column; width: 1921px; height: 1073px; }
.page::before { content: ""; position: absolute; left: 0; top: 0; width: 1px; height: 1039px; background: #1a55d0; z-index: 9; }

/* icon paints */
.ic { width: 16px; height: 16px; flex: none; display: block; }
.ic.big { width: 28px; height: 28px; }
.ic.s14 { width: 14px; height: 14px; }
.sg, .sb, .sl, .sr, .sk, .sg2, .sb2, .sw, .scad { fill: none; stroke-width: 1; }
.sg { stroke: #4c5a6c; } .sb { stroke: #2f80e4; } .sl { stroke: #b8b8b8; } .sr { stroke: #d9282f; }
.sk { stroke: #444; } .sw { stroke: #fff; }
.sg2 { stroke: #4c5668; stroke-width: 2; } .sb2 { stroke: #2a7de2; stroke-width: 1.800; }
.fb { fill: #2f80e4; stroke: none; } .fg { fill: #4c5a6c; stroke: none; }
.fl { fill: #cfe2f8; stroke: #2f80e4; } .fl2 { fill: #a9cdf4; stroke: #2f80e4; }
.dash { stroke-dasharray: 2.500 1; }
.scad { stroke: #808080; }

/* caret */
.caret { display: inline-block; width: 0; height: 0; margin-left: 6px; border: 3.500px solid transparent; border-top: 4px solid #8a8a8a; border-bottom: 0; flex: none; }
.caret.lt { border-top-color: #c6c6c6; }
.caret.dk { border-top-color: #555; }
.caret.sm { border-width: 2.500px; border-top-width: 3px; border-bottom: 0; margin-left: 3px; }
.caret.qm { border-top-color: #666; margin-left: 3px; }

/* header */
.top { height: 40px; background: #fff; display: flex; }
.logo { width: 58px; flex: none; position: relative; padding: 2px 0 0 8px; }
.logo-a { width: 34px; height: 32px; display: block; }
.logo-mark { position: absolute; left: 40px; top: 31px; border-left: 4px solid transparent; border-bottom: 4px solid #555; }
.top-rows { flex: 1; display: flex; flex-direction: column; }
.row-title { height: 20px; display: grid; grid-template-columns: 706px 391px 1fr; align-items: center; }
.qat { display: flex; align-items: center; margin-left: -2px; }
.qat .ic { width: 15px; height: 15px; margin-right: 11px; }
.qat .caret.lt { margin: 0 10px 0 -6px; }
.wintitle { font-size: 12.500px; white-space: nowrap; color: #444; text-align: center; }
.winbtns { display: flex; justify-content: flex-end; align-items: center; padding-right: 12px; gap: 29px; }
.w-min { width: 7px; height: 1.500px; background: #555; margin-top: 6px; }
.w-max { width: 9px; height: 9px; border: 1px solid #555; box-shadow: 2px -2px 0 -1px #fff, 2px -2px 0 0 #555; }
.w-close { font-size: 11px; line-height: 12px; color: #555; }
.row-tabs { height: 20px; display: flex; align-items: flex-end; justify-content: space-between; }
.tabs { display: flex; height: 20px; align-items: center; }
.tab { line-height: 17px; white-space: nowrap; }
.tab.t1 { margin-left: 6px; } .tab.t2 { margin-left: 26px; }
.tab.t3 { margin-left: 13px; background: #2a8cf0; color: #fff; border-radius: 10px; width: 49px; height: 19px; text-align: center; }
.tab.t4 { margin-left: 15px; } .tab.t5 { margin-left: 26px; } .tab.t6 { margin-left: 26px; }
.tab.t7 { margin-left: 27px; } .tab.t8 { margin-left: 25px; } .tab.t9 { margin-left: 26px; }
.tools-r { display: flex; align-items: center; height: 20px; }
.m1 { margin-right: 7px; } .m2 { margin-right: 5px; } .m3 { margin-right: 5px; }
.help { font-size: 15px; color: #555; margin-right: 10px; display: flex; align-items: center; }
.searchbox { width: 149px; height: 15px; border: 1px solid #d6d6d6; border-radius: 2px; display: flex; align-items: center; justify-content: space-between; padding: 0 2px 0 3px; color: #bbb; line-height: 13px; }
.chev { margin: 0 7px 0 1px; width: 14px; height: 14px; }

/* ribbon */
.ribbon { height: 101px; background: #fff; display: flex; padding-top: 2px; border-bottom: 1px solid #ddd; }
.grp { display: flex; flex-direction: column; height: 96px; border-right: 1px solid #dcdcdc; flex: none; }
.g1 { width: 145px; padding-left: 9px; } .g2 { width: 249px; padding-left: 7px; } .g3 { width: 219px; padding-left: 9px; }
.g4 { width: 77px; padding-left: 12px; } .g5 { width: 144px; padding-left: 12px; } .g6 { width: 193px; padding-left: 11px; }
.g7 { width: 204px; padding-left: 8px; } .g8 { width: 78px; padding-left: 12px; } .g9 { width: 219px; padding-left: 8px; }
.g10 { width: 288px; padding-left: 8px; }
.grp-body { display: flex; height: 73px; flex: none; }
.grp-label { height: 23px; display: flex; align-items: center; justify-content: center; white-space: nowrap; margin-left: -12px; }
.grp-label .caret { margin-left: 6px; }
.col { display: flex; flex-direction: column; flex: none; }
.w85 { width: 85px; } .w134 { width: 134px; } .w33 { width: 33px; } .w109 { width: 109px; } .w87 { width: 87px; } .w95 { width: 95px; } .w97 { width: 97px; }
.ml10 { margin-left: 10px; } .ml13 { margin-left: 13px; }
.it { height: 23px; display: flex; align-items: center; gap: 3px; white-space: nowrap; }
.it.off { color: #c4c4c4; }
.it .caret { margin-left: 5px; }
.bigsel { width: 43px; height: 67px; margin: 3px 4px 0 0; background: #c3d8ee; border-radius: 3px; display: flex; flex-direction: column; align-items: center; padding-top: 5px; gap: 6px; }
.bigb { display: flex; flex-direction: column; align-items: center; flex: none; padding-top: 6px; gap: 6px; white-space: nowrap; }
.w41 { width: 41px; align-items: flex-start; } .w41 span { margin-left: 3px; }
.w36 { width: 36px; } .w48 { width: 48px; }

/* selector bar */
.selbar { height: 27px; background: #f2f2f2; display: flex; gap: 6.300px; padding: 3px 0 0 3px; border-bottom: 1px solid #e6e6e6; }
.sel { width: 99px; height: 21px; background: #fff; border: 1px solid #e4e4e4; border-radius: 3px; display: flex; align-items: center; justify-content: space-between; padding: 0 5px 0 3px; }
.sel span { overflow: hidden; white-space: nowrap; flex: 1; }
.sel .wide { letter-spacing: .5px; }
.sel .caret { margin-left: 2px; }

/* main */
.main { height: 840px; display: flex; background: #f3f3f3; }
.nav { width: 63px; margin-left: 1px; flex: none; background: #fff; border-right: 1px solid #d8d8d8; }
.pclose { height: 11px; background: #e4e4e4; display: flex; justify-content: flex-end; }
.pclose span { color: #999; font-size: 13px; line-height: 10px; padding-right: 1px; }
.ptitle { height: 22px; background: #f0f0f0; color: #8a8a8a; font-weight: 500; line-height: 22px; padding-left: 9px; border-bottom: 1px solid #e2e2e2; }
.nav-tools { height: 27px; display: flex; align-items: center; gap: 16px; padding: 2px 0 0 8px; border-bottom: 1px solid #e6e6e6; }
.nav-tools .bx { width: 15px; height: 15px; }
.nav-h { height: 25px; margin-bottom: 3px; background: #ececec; line-height: 25px; padding-left: 4px; color: #444; }
.nav-h.first { margin-top: 5px; }
.nav-h.second { margin-bottom: 0; }
.nav-h.top2 { margin-top: 2px; }
.nav-i { height: 28px; display: flex; align-items: center; justify-content: center; }
.nav-i.cur { background: #c8ddf3; }
.nic { width: 18px; height: 18px; display: block; transform: translateX(-3px); }
.tb-lbl { font: 700 7px "Liberation Sans", sans-serif; fill: #2f80e4; text-anchor: middle; }

.col2 { width: 368px; margin-left: 3px; flex: none; display: flex; flex-direction: column; }
.panel { background: #fff; border: 1px solid #dcdcdc; border-top: 0; }
.pa { height: 172px; display: flex; flex-direction: column; }
.pb { height: 637px; margin-top: 3px; }
.ptools { height: 27px; padding-top: 3px; display: flex; align-items: center; background: #fff; position: relative; border-bottom: 1px solid #e6e6e6; white-space: nowrap; }
.pt { display: flex; align-items: center; gap: 4px; }
.pt .caret { margin-left: 5px; }
.a1 { margin-left: 4px; } .a2 { margin-left: 5px; gap: 2px; } .a3 { margin-left: 8px; } .a4 { margin-left: 8px; } .a5 { margin-left: 8px; }
.more { position: absolute; right: 2px; top: 3px; width: 11px; height: 19px; border: 1px solid #e4e4e4; border-radius: 3px; font-size: 6px; line-height: 17px; text-align: center; color: #555; letter-spacing: -1px; }
.psearch { height: 21px; padding: 2px 6px 0 3px; display: flex; align-items: center; justify-content: space-between; color: #bcbcbc; border-bottom: 1px solid #e6e6e6; flex: none; }
.tree { flex: 1; position: relative; }
.tree-scrollarea { padding-top: 6px; overflow: hidden; width: 353px; white-space: nowrap; }
.tr-root { height: 17px; line-height: 17px; padding-left: 14px; display: flex; align-items: center; }
.tr-root .caret { margin: 0 4px 0 0; }
.tr-item { margin: 4px 0 0 40px; height: 21px; line-height: 21px; padding-left: 4px; overflow: hidden; width: 313px; letter-spacing: .25px; }
.tr-item + .tr-item { margin-top: 3px; }
.sel-row { background: #bfd6ee; border-radius: 3px 0 0 3px; }
.used { color: #6f9fe8; }
.vthumb { position: absolute; left: 355px; top: 16px; width: 8px; height: 22px; background: #c8c8c8; border-radius: 4px; }
.hbar { display: flex; align-items: center; position: absolute; left: 6px; bottom: 0; width: 350px; height: 15px; }
.arr { width: 0; height: 0; border: 4px solid transparent; flex: none; }
.arr.l { border-left: 0; border-right: 5px solid #333; }
.arr.r { border-right: 0; border-left: 5px solid #333; }
.hthumb { width: 311px; height: 7px; background: #c8c8c8; border-radius: 4px; margin: 0 15px 0 4px; }
.ptable { width: 364px; margin-left: 0; border-collapse: collapse; table-layout: fixed; }
.c1 { width: 21px; } .c2 { width: 115px; } .c3 { width: 187px; } .c4 { width: 41px; }
.ptable th, .ptable td { border: 1px solid #dedede; height: 21px; padding: 0 3px; font-weight: 400; white-space: nowrap; overflow: hidden; line-height: 19px; }
.ptable thead th { height: 20px; text-align: center; }
.ptable .n { text-align: center; padding: 0; }
.lnk { color: #2a6fe0; }
.ptable .k { text-align: center; padding: 0; }
.cb { display: inline-block; width: 14px; height: 14px; border: 1px solid #8f8f8f; border-radius: 2px; background: #fff; vertical-align: middle; position: relative; flex: none; }
.cb.on { background: #1f7ae6; border-color: #1f7ae6; }
.cb.on::after { content: ""; position: absolute; left: 4px; top: 1px; width: 4px; height: 8px; border: solid #fff; border-width: 0 2px 2px 0; transform: rotate(40deg); }
.cb.g { background: #f3f3f3; border-color: #b0b0b0; }
.cb.part::after { content: ""; position: absolute; inset: 2px; background: #ededed; border: 1px solid #d0d0d0; }
.pm { display: inline-block; width: 12px; height: 12px; border: 1px solid #888; border-radius: 2px; text-align: center; line-height: 9px; font-size: 10px; margin-right: 6px; vertical-align: -1px; color: #444; }
.pbtnrow { height: 28px; padding: 2px 0 0 11px; flex: none; }
.pbtn { display: block; width: 78px; height: 26px; background: #fff; border: 1px solid #dedede; border-radius: 4px; text-align: center; line-height: 24px; }

.split { width: 4px; flex: none; display: flex; align-items: flex-start; padding-top: 371px; }
.split i { display: block; width: 4px; height: 100px; background: #6c7480; }
.split.sr { width: 3px; }
.split.sr i { width: 3px; }

/* canvas */
.canvas { width: 1158px; height: 840px; flex: none; position: relative; background: #000; overflow: hidden; }
.cad { display: block; width: 1158px; height: 840px; }
.cadl path, .cadl circle, .cadl ellipse, .cadl rect { fill: none; stroke: #8b8b8b; stroke-width: 1; }
.cadl .thin { stroke: #5a5a5a; }
.flipx { transform: translateX(2255px) scaleX(-1); }
.pct { font: 24px "Liberation Sans", sans-serif; fill: #a9a9a9; }
.pink { fill: none; stroke: #c08a8a; }
.yg { stroke: #a8c800; stroke-width: 2.500; }
.yc { fill: none; stroke: #f0d000; }
.yl { stroke: #d0c800; fill: none; }
.cadt { font: 32px "Noto Sans CJK SC", sans-serif; fill: #e8e8e8; }
.thin2 { font-size: 40px; font-family: "Liberation Sans", sans-serif; }
.axy { font: 15px "Liberation Sans", sans-serif; fill: #00e000; text-anchor: middle; }
.axx { font: 16px "Liberation Sans", sans-serif; fill: #ff0000; }

.viewbar { position: absolute; right: 1px; top: 0; width: 32px; height: 227px; background: #fff; border-radius: 3px; display: flex; flex-direction: column; align-items: center; padding-top: 13px; }
.vi { width: 20px; height: 20px; display: block; flex: none; }
.vi3d { position: relative; height: 20px; margin: 9px 0; }
.vi3d span { position: absolute; left: 3px; top: 8px; font: 700 8px/10px "Liberation Sans", sans-serif; color: #2f80e4; }
.vc { margin: 8px 0 9px; }
.vsep { width: 22px; margin: 0 0 7px; border: 0; border-top: 1px solid #888; }

.hint { position: absolute; left: 0; right: 0; bottom: 0; height: 27px; background: rgba(48,48,48,.93); color: #fff; display: flex; align-items: center; justify-content: center; gap: 5px; }
.hint-ic { width: 14px; height: 16px; }

.dialog { position: absolute; left: 130px; top: 281px; width: 282px; height: 130px; background: radial-gradient(circle at 100% 92%, #f1f1e6 0, #e2e2e2 40px); padding: 0 12px; box-shadow: 0 0 0 1px #cfcfcf inset; }
.dialog::after { content: ""; position: absolute; left: 262px; top: 85px; width: 8px; height: 25px; border: 1px solid #d8d8d8; border-left: 0; border-radius: 0 3px 3px 0; }
.dlg-head { height: 38px; display: flex; align-items: center; justify-content: space-between; color: #555; font-size: 13px; padding-right: 2px; }
.dlg-x { width: 11px; height: 11px; stroke: #777; fill: none; }
.dlg-row { display: flex; align-items: center; gap: 6px; margin-top: 9px; height: 24px; color: #555; }
.dlg-sel { position: relative; width: 179px; height: 24px; background: #fff; border: 1px solid #d4d4d4; border-radius: 3px; display: flex; align-items: center; justify-content: space-between; padding: 0 6px 0 8px; color: #444; }
.caret-up { width: 0; height: 0; border: 3px solid transparent; border-bottom: 3.500px solid #555; border-top: 0; }
.dd { position: absolute; left: -1px; top: 23px; width: 199px; height: 299px; background: #fff; border: 1px solid #d0d0d0; overflow: hidden; box-shadow: 0 0 5px rgba(0,0,0,.35); z-index: 3; padding-top: 1px; }
.dd-root { height: 24px; display: flex; align-items: center; padding-left: 14px; color: #333; }
.dd-root .caret { margin: 0 4px 0 0; }
.dd-i { height: 24px; line-height: 24px; padding-left: 43px; color: #333; }
.dd-thumb { position: absolute; left: 187px; top: 14px; width: 8px; height: 154px; background: #cbcbcb; border-radius: 4px; }

/* right */
.col3 { width: 321px; flex: none; padding-right: 2px; display: flex; flex-direction: column; }
.pc { height: 282px; position: relative; }
.b1 { margin-left: 4px; } .b2 { margin-left: 1px; } .b3 { margin-left: 2px; } .b4 { margin-left: 10px; gap: 2px; }
.pc .ptools .caret { margin-left: 6px; }
.dwg { height: 207px; position: relative; overflow: hidden; }
.dtable { width: 306px; border-collapse: collapse; table-layout: fixed; }
.d1 { width: 126px; } .d2 { width: 61px; } .d4 { width: 58px; }
.dtable th, .dtable td { border: 1px solid #e0e0e0; height: 21px; padding: 0 3px; font-weight: 400; white-space: nowrap; overflow: hidden; line-height: 19px; }
.dtable thead th { text-align: center; }
.dtable .act { background: #7cb5f4; color: #fff; font-weight: 500; }
.dtable .clip { text-align: left; padding-left: 16px; text-overflow: clip; }
.dtable .rt { padding-left: 2px; }
.pm.mn { margin-right: 9px; line-height: 8px; vertical-align: 0; }
.dtable .ch { padding-left: 31px; background: linear-gradient(#d0d0d0, #d0d0d0) 8px 0 / 1px 100% no-repeat, linear-gradient(#d0d0d0, #d0d0d0) 8px 50% / 17px 1px no-repeat; }
.dtable .cur td { background-color: #d4e6fa; }
.dtable .focus { outline: 2px solid #777; outline-offset: -2px; }
.dv { position: absolute; left: 308px; top: 16px; width: 8px; height: 140px; background: #c8c8c8; border-radius: 4px; }
.hbar.r { left: 4px; bottom: 3px; width: 300px; }
.hthumb.t2 { width: 221px; margin: 0 58px 0 4px; }
.pd { flex: 1; margin-top: 5px; display: flex; flex-direction: column; }
.dtabs { height: 27px; padding: 5px 0 0 3px; display: flex; gap: 3px; background: #fff; border-bottom: 1px solid #ccc; flex: none; }
.dt { width: 60px; height: 22px; background: #dadada; border-radius: 3px 3px 0 0; text-align: center; line-height: 21px; color: #555; }
.dt.on { width: 62px; background: #fff; color: #3f87e8; border: 1px solid #cfcfcf; border-bottom: 1px solid #fff; margin-bottom: -1px; height: 23px; }
.radios { height: 31px; display: flex; align-items: center; padding-left: 7px; border-bottom: 1px solid #ccc; flex: none; color: #222; white-space: nowrap; }
.rd { display: flex; align-items: center; gap: 7px; margin-right: 7px; }
.rd.r3 { margin-right: 4px; }
.rd i { width: 14px; height: 14px; border: 1px solid #888; border-radius: 50%; background: #fff; position: relative; }
.rd.on i::after { content: ""; position: absolute; inset: 2.500px; background: #1f7ae6; border-radius: 50%; }
.ftree { height: 422px; position: relative; overflow: hidden; color: #7e7e7e; padding-top: 2px; }
.f-root { height: 24px; display: flex; align-items: center; padding-left: 11px; }
.f-root .caret { margin: 0 5px 0 0; }
.f-root .cb { margin-right: 7px; }
.f-i { height: 24px; display: flex; align-items: center; padding-left: 45px; gap: 6px; }
.f-thumb { position: absolute; left: 307px; top: 16px; width: 8px; height: 222px; background: #cbcbcb; border-radius: 4px; }
.fother { height: 40px; flex: 1; display: flex; align-items: center; padding-left: 2px; gap: 2px; border-top: 1px solid #ccc; color: #333; }

/* status */
.status { height: 31px; background: #fbfbfb; display: flex; align-items: center; font-size: 12px; color: #555; white-space: nowrap; border-bottom: 1px solid #e6e6e6; }
.st { display: block; }
.s1 { width: 120px; margin-left: 3px; } .s2 { width: 140px; } .s3 { width: 110px; } .s4 { width: 110px; }
.stb { display: flex; gap: 4.500px; }
.tbn { width: 24px; height: 24px; border: 1px solid #cfcfcf; border-radius: 4px; background: #fff; display: flex; align-items: center; justify-content: center; flex: none; }
.tbn.wd { width: 34px; gap: 1px; }
.tbn.act { background: #d7e8fb; border-color: #3a8ae6; }
.cadb { margin: 0 10px 0 7px; }
.slider { width: 46px; height: 24px; display: flex; align-items: center; justify-content: flex-end; background: linear-gradient(#cfcfcf, #cfcfcf) 0 50% / 100% 3px no-repeat; flex: none; }
.slider i { width: 8px; height: 17px; background: #d8d8d8; border: 1px solid #888; border-radius: 2px; }

/* taskbar */
.taskbar { height: 34px; background: linear-gradient(90deg, #1e3c47 0%, #1f3a4a 45%, #1a2a4d 100%); display: flex; justify-content: space-between; align-items: center; color: #fff; overflow: hidden; }
.tk-left { display: flex; align-items: center; height: 100%; padding-left: 1px; }
.tk { width: 49px; height: 34px; display: flex; align-items: center; justify-content: center; flex: none; }
.tk.cur { background: rgba(255,255,255,.2); }
.tic { width: 20px; height: 20px; display: block; }
.acad { width: 22px; height: 28px; margin: 3px 13.500px; background: #f5eaea; color: #b01e28; font: 700 22px/28px "Liberation Serif", serif; }
.chrome { display: block; width: 20px; height: 20px; border-radius: 50%; background: radial-gradient(circle, #3a78e8 0 4px, #fff 4.500px 6px, transparent 6.500px), conic-gradient(#e94335 0 33%, #fbbc05 33% 66%, #34a853 66% 100%); }
.tic.app { width: 21px; height: 24px; }
.cadbox { display: block; width: 24px; height: 28px; background: #1860a8; border: 2px solid #6a7a88; border-radius: 2px; font: 9px/24px "Liberation Sans", sans-serif; text-align: center; color: #cfe6ff; }
.tk-right { display: flex; align-items: center; height: 100%; padding-right: 13px; }
.tr-ic { width: 14px; height: 14px; margin-right: 10px; display: block; flex: none; }
.tr-t { font-size: 14px; margin: 0 12px 0 0; }
.tr-pin { width: 14px; height: 14px; background: #fff; color: #111; font-size: 12px; line-height: 14px; text-align: center; margin-right: 24px; }
.clock { display: flex; flex-direction: column; align-items: center; line-height: 18px; padding-top: 6px; margin-right: 17px; width: 66px; white-space: nowrap; }
.notif { position: relative; width: 18px; }
.notif b { position: absolute; right: -4px; top: 8px; width: 12px; height: 12px; border-radius: 50%; background: #222; color: #fff; font-size: 10px; line-height: 12px; text-align: center; }
```
